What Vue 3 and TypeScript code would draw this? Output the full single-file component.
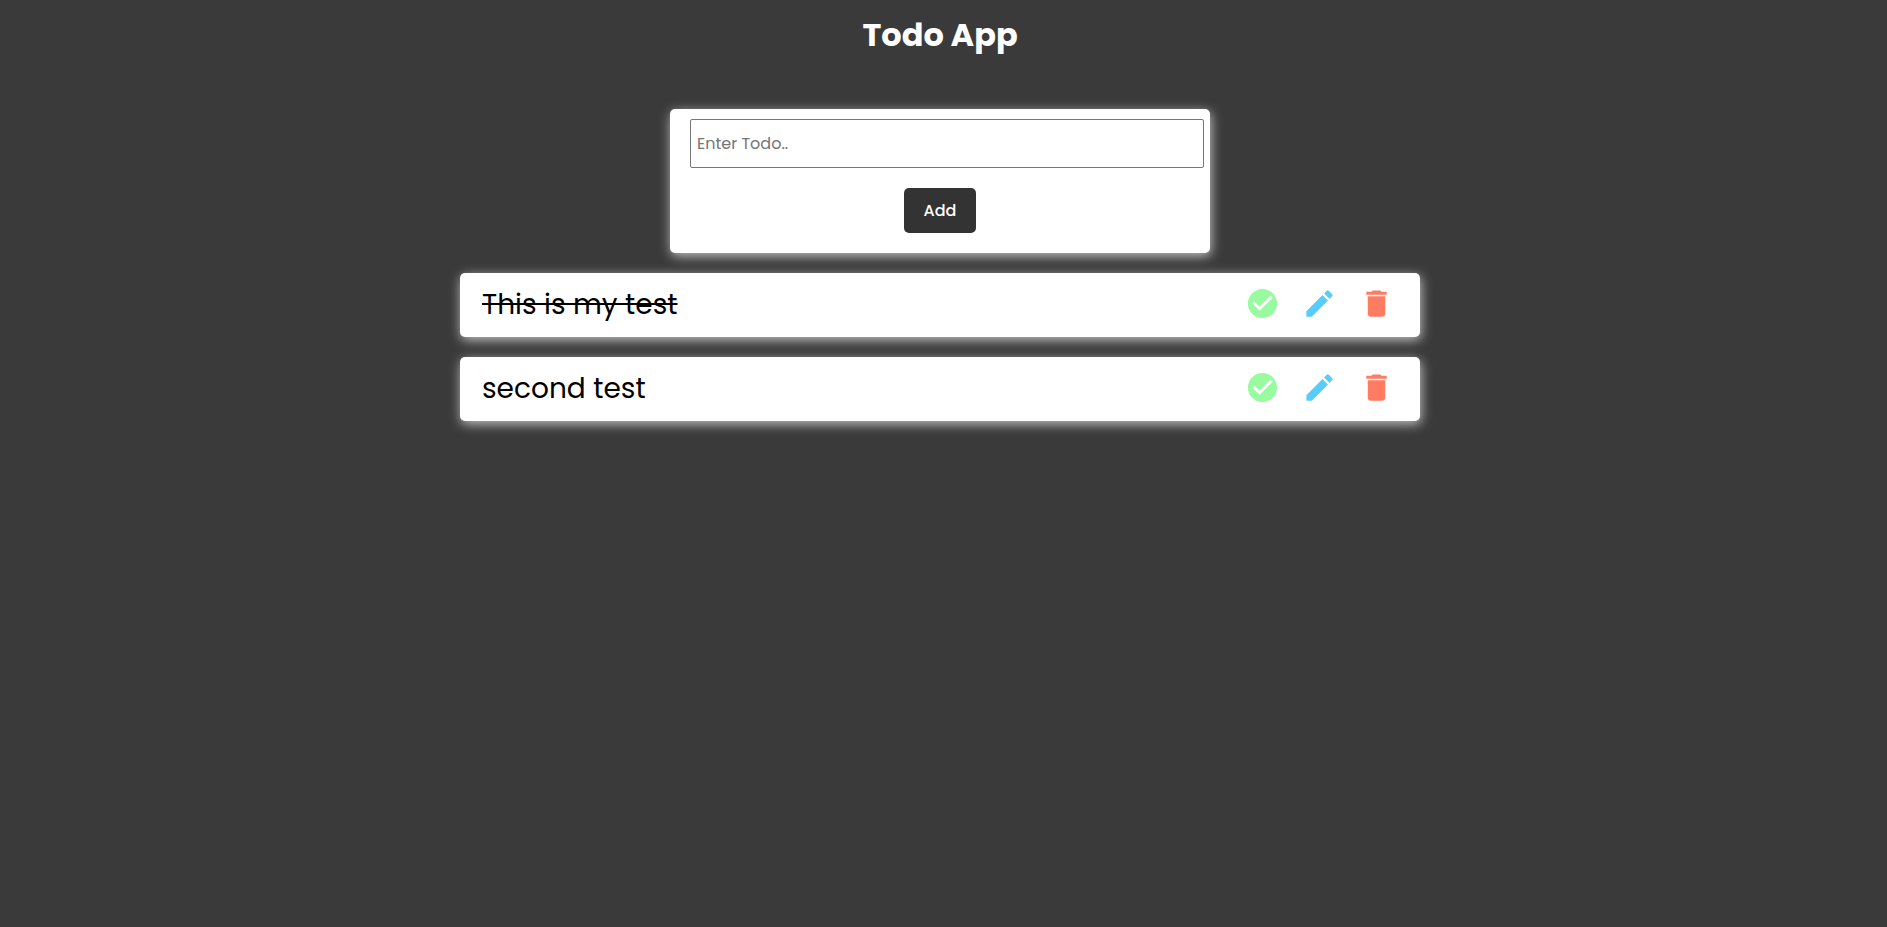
<script setup lang="ts">
import { ref } from 'vue'

interface Todo {
  id: number
  text: string
  done: boolean
}

const draft = ref('')
const editingId = ref<number | null>(null)
const todos = ref<Todo[]>([
  { id: 1, text: 'This is my test', done: true },
  { id: 2, text: 'second test', done: false },
])

function submit(): void {
  const text = draft.value.trim()
  if (!text) return
  const current = todos.value.find((t) => t.id === editingId.value)
  if (current) current.text = text
  else todos.value.push({ id: Date.now(), text, done: false })
  editingId.value = null
  draft.value = ''
}

function edit(todo: Todo): void {
  editingId.value = todo.id
  draft.value = todo.text
}

function remove(id: number): void {
  todos.value = todos.value.filter((t) => t.id !== id)
}
</script>

<template>
  <main class="app">
    <h1 class="title">Todo App</h1>

    <form class="card form" @submit.prevent="submit">
      <input v-model="draft" class="field" type="text" placeholder="Enter Todo.." aria-label="Enter Todo" />
      <button class="add" type="submit">Add</button>
    </form>

    <ul class="list">
      <li v-for="todo in todos" :key="todo.id" class="card row">
        <span class="text" :class="{ done: todo.done }">{{ todo.text }}</span>
        <div class="actions">
          <button class="icon check" type="button" aria-label="Complete" @click="todo.done = !todo.done">
            <svg viewBox="0 0 24 24"><path d="M12 2C6.48 2 2 6.48 2 12s4.48 10 10 10 10-4.48 10-10S17.52 2 12 2zm-2 15-5-5 1.41-1.41L10 14.17l7.59-7.59L19 8l-9 9z" /></svg>
          </button>
          <button class="icon pencil" type="button" aria-label="Edit" @click="edit(todo)">
            <svg viewBox="0 0 24 24"><path d="M3 17.25V21h3.75L17.81 9.94l-3.75-3.75L3 17.25zM20.71 7.04a.996.996 0 0 0 0-1.41l-2.34-2.34a.996.996 0 0 0-1.41 0l-1.83 1.83 3.75 3.75 1.83-1.83z" /></svg>
          </button>
          <button class="icon trash" type="button" aria-label="Delete" @click="remove(todo.id)">
            <svg viewBox="0 0 24 24"><path d="M6 19c0 1.1.9 2 2 2h8c1.1 0 2-.9 2-2V7H6v12zM19 4h-3.5l-1-1h-5l-1 1H5v2h14V4z" /></svg>
          </button>
        </div>
      </li>
    </ul>
  </main>
</template>

<style>
body {
  margin: 0;
  background: #3a3a3a;
}
</style>

<style scoped>
.app {
  display: flex;
  flex-direction: column;
  align-items: center;
  padding: 11px 7px 20px 0;
  font-family: Poppins, Inter, 'Open Sans', sans-serif;
}

.title {
  margin: 0 0 50px;
  font-size: 32px;
  line-height: 48px;
  font-weight: 700;
  color: #fff;
}

.card {
  box-sizing: border-box;
  background: #fff;
  border-radius: 5px;
  box-shadow: 1px 3px 12px rgba(255, 255, 255, 0.7);
}

.form {
  display: flex;
  flex-direction: column;
  align-items: center;
  gap: 20px;
  width: 100%;
  max-width: 540px;
  padding: 10px 6px 20px 20px;
}

.field {
  box-sizing: border-box;
  width: 100%;
  height: 49px;
  padding: 0 6px;
  border: 1px solid #767676;
  border-radius: 2px;
  background: #fff;
  font: 400 16px/24px Poppins, Inter, 'Open Sans', sans-serif;
  color: #000;
}

.field::placeholder {
  color: #757575;
}

.add {
  margin-right: 14px;
  padding: 10px 20px;
  border: 0;
  border-radius: 5px;
  background: #333;
  font: 500 16px/25px Poppins, Inter, 'Open Sans', sans-serif;
  color: #fff;
  cursor: pointer;
}

.list {
  display: flex;
  flex-direction: column;
  gap: 20px;
  width: 100%;
  max-width: 960px;
  margin: 20px 0 0;
  padding: 0;
  list-style: none;
}

.row {
  display: flex;
  align-items: flex-start;
  justify-content: space-between;
  min-height: 64px;
  padding: 11px 26px 11px 22px;
}

.text {
  font-size: 28px;
  line-height: 42px;
  color: #000;
}

.done {
  text-decoration: line-through 2px;
}

.actions {
  display: flex;
  gap: 22px;
  padding-top: 2px;
}

.icon {
  display: flex;
  padding: 0;
  border: 0;
  background: none;
  cursor: pointer;
}

.icon svg {
  width: 35px;
  height: 35px;
  fill: currentColor;
}

.check {
  color: #98fba0;
}

.pencil {
  color: #57cdff;
}

.trash {
  color: #ff7b62;
}
</style>
